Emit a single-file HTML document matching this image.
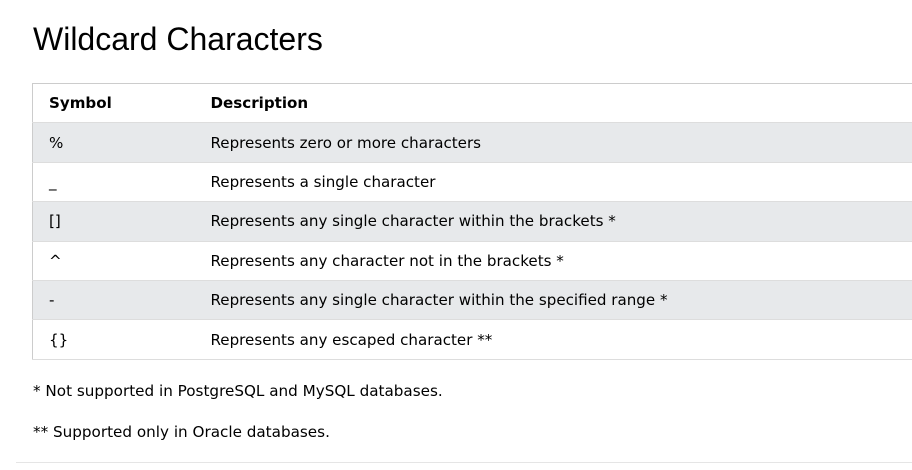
<!DOCTYPE html>
<html><head><meta charset="utf-8"><style>
body{margin:0;background:#fff;width:912px;height:470px;overflow:hidden;font-family:"DejaVu Sans",Verdana,sans-serif;color:#000}
h1{position:absolute;left:33px;top:21px;margin:0;font:32px "Liberation Sans",Arial,sans-serif;font-weight:normal}
table{position:absolute;left:32px;top:83px;width:890px;border-collapse:collapse;border:1px solid #ccc;font-size:15.1px}
td,th{height:39.4px;padding:0 0 0 16px;text-align:left;box-sizing:border-box;border-bottom:1px solid #ddd}
th{font-weight:bold}
tr:nth-child(even){background:#e7e9eb}
td:first-child,th:first-child{width:162px}
p{position:absolute;left:33px;margin:0;font-size:15.2px}
.hr{position:absolute;left:16px;right:0;top:462px;border-top:1px solid #e5e5e5}
</style></head><body>
<h1>Wildcard Characters</h1>
<table>
<tr><th>Symbol</th><th>Description</th></tr>
<tr><td>%</td><td>Represents zero or more characters</td></tr>
<tr><td>_</td><td>Represents a single character</td></tr>
<tr><td>[]</td><td>Represents any single character within the brackets *</td></tr>
<tr><td>^</td><td>Represents any character not in the brackets *</td></tr>
<tr><td>-</td><td>Represents any single character within the specified range *</td></tr>
<tr><td>{}</td><td>Represents any escaped character **</td></tr>
</table>
<p style="top:382px">* Not supported in PostgreSQL and MySQL databases.</p>
<p style="top:423px">** Supported only in Oracle databases.</p>
<div class="hr"></div>
</body></html>
